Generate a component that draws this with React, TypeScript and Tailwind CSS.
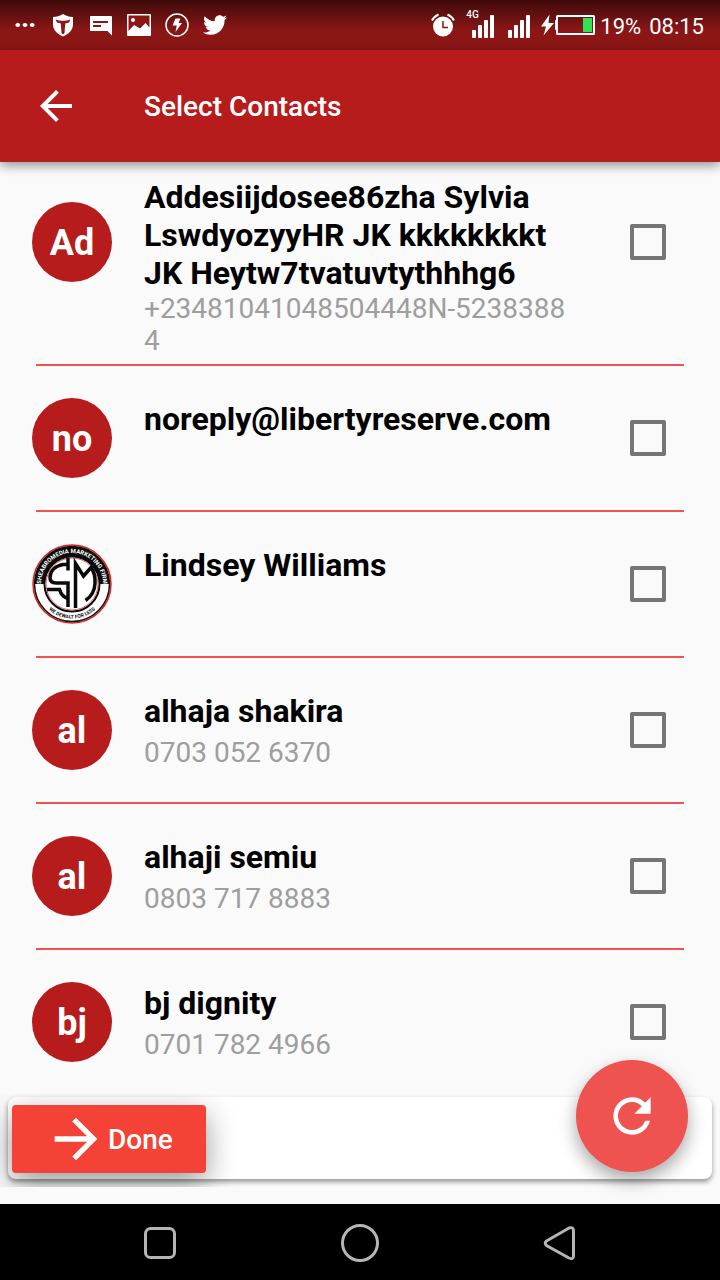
import React from 'react';
import { FaTwitter } from 'react-icons/fa';
import { MdArrowBack, MdArrowForward, MdMoreHoriz, MdRefresh } from 'react-icons/md';

const contacts = [
  {
    initials: 'Ad',
    name: 'Addesiijdosee86zha Sylvia LswdyozyyHR JK kkkkkkkkt JK Heytw7tvatuvtythhhg6',
    phone: '+23481041048504448N-52383884',
    tall: true
  },
  { initials: 'no', name: 'noreply@libertyreserve.com' },
  { name: 'Lindsey Williams' },
  { initials: 'al', name: 'alhaja shakira', phone: '0703 052 6370' },
  { initials: 'al', name: 'alhaji semiu', phone: '0803 717 8883' },
  { initials: 'bj', name: 'bj dignity', phone: '0701 782 4966' }
];

function SignalBars() {
  return (
    <svg width="22" height="24" viewBox="0 0 22 24" fill="currentColor">
      <rect x="0" y="16" width="4" height="8" rx="1" />
      <rect x="6" y="11" width="4" height="13" rx="1" />
      <rect x="12" y="6" width="4" height="18" rx="1" />
      <rect x="18" y="1" width="4" height="23" rx="1" />
    </svg>
  );
}

function StatusBar() {
  return (
    <div className="flex h-[50px] items-center justify-between bg-[#8b1616] bg-linear-to-b from-[#3f0a0a] to-[#8b1616] to-60% pl-[13px] pr-4 text-white">
      <div className="flex items-center gap-[14px]">
        <MdMoreHoriz className="size-6" viewBox="2 0 20 24" preserveAspectRatio="none" />
        <svg width="24" height="24" viewBox="0 0 24 24">
          <path d="M12 1C9 3 5.500 4 2 4v7c0 6 4 10 10 12.500C18 21 22 17 22 11V4c-3.500 0-7-1-10-3z" fill="currentColor" />
          <path d="M4.500 6.500C9 8.200 15 8.200 19.500 6.500L18 9.500l-3.800 1-.7 9.500L12 21.500 10.500 20l-.7-9.500L6 9.500z" fill="#8b1616" />
        </svg>
        <svg width="24" height="24" viewBox="0 0 24 24">
          <path d="M2 3h20a1 1 0 0 1 1 1v18.500L18.500 18H2a1 1 0 0 1-1-1V4a1 1 0 0 1 1-1z" fill="currentColor" />
          <path d="M4 9h15M4 13h8" stroke="#8b1616" strokeWidth="2" />
        </svg>
        <svg width="24" height="24" viewBox="0 0 24 24">
          <rect x="0" y="1" width="24" height="22" rx="1" fill="currentColor" />
          <path d="M1.500 2.500h21v12L18.500 10 13 15.500 7 12l-5.500 6z" fill="#8b1616" />
          <circle cx="6" cy="7" r="2" fill="currentColor" />
        </svg>
        <svg width="24" height="24" viewBox="0 0 24 24">
          <circle cx="12" cy="12" r="11" fill="none" stroke="currentColor" strokeWidth="1.500" />
          <path d="M10.500 5.500h5l-2 4.500H17l-6.500 9 1.200-6.500H7.500z" fill="currentColor" />
        </svg>
        <FaTwitter className="size-6" />
      </div>
      <div className="flex items-center">
        <svg width="24" height="24" viewBox="0 0 24 24">
          <circle cx="12" cy="13.500" r="10" fill="currentColor" />
          <path d="M12 8v6.500h5" fill="none" stroke="#8b1616" strokeWidth="1.500" />
          <path d="M1 7.500Q3 3.500 7.500 1.500M23 7.500Q21 3.500 16.500 1.500" fill="none" stroke="currentColor" strokeWidth="2" />
        </svg>
        <div className="relative ml-[17px] pt-0.5">
          <SignalBars />
          <span className="absolute -left-1.5 -top-0.5 text-[10px] leading-[10px] font-medium">4G</span>
        </div>
        <div className="ml-[14px] pt-0.5">
          <SignalBars />
        </div>
        <svg className="ml-2.5 mr-1" width="56" height="24" viewBox="0 0 56 24">
          <path d="M9.500 1.500L1 13.500h5L3.500 22.500 14 10H8.500z" fill="currentColor" />
          <rect x="17" y="3" width="37" height="18" rx="0.500" fill="none" stroke="currentColor" strokeWidth="2" />
          <rect x="15" y="7" width="3" height="10" rx="1" fill="currentColor" />
          <rect x="43" y="5" width="9" height="14" fill="#35e052" />
        </svg>
        <div className="flex gap-2 pt-1 text-[22px] leading-6">
          <span>19%</span>
          <span>08:15</span>
        </div>
      </div>
    </div>
  );
}

function LogoAvatar() {
  return (
    <svg className="mt-8 size-20 shrink-0" viewBox="0 0 80 80" role="img" aria-label="Lindsey Williams">
      <circle cx="40" cy="40" r="39" fill="#fff" stroke="#e0201f" strokeWidth="1.500" />
      <circle cx="40" cy="40" r="37.500" fill="#fff" stroke="#111" strokeWidth="1.500" />
      <path d="M2.500 40a37.500 37.500 0 0 1 75 0z" fill="#0a0a0a" />
      <circle cx="40" cy="40" r="27.500" fill="#fff" stroke="#0a0a0a" strokeWidth="2" />
      <circle cx="40" cy="40" r="26" fill="none" stroke="#d66" strokeWidth="1" />
      <path
        d="M36 14v12.500M36 20.500h-5C23 22 18 27 18 33.500q0 5.500 6 5.500h12v24M15 45.500h12.500q2 7 8.500 9"
        fill="none"
        stroke="#0a0a0a"
        strokeWidth="3.500"
      />
      <path d="M43.500 64V19.500L51.500 32l7.500-8.500q4.500 6 4 16-.5 11-9.500 17" fill="none" stroke="#0a0a0a" strokeWidth="3.500" />
      <path id="logo-top" d="M9 40a31 31 0 0 1 62 0" fill="none" />
      <path id="logo-bottom" d="M14 62.700A34.500 34.500 0 0 0 66 62.700" fill="none" />
      <text fill="#fff" className="text-[6px] font-bold">
        <textPath href="#logo-top" startOffset="50%" textAnchor="middle">SHEABROMEDIA MARKETING FIRM</textPath>
      </text>
      <text fill="#111" className="text-[5px] font-bold">
        <textPath href="#logo-bottom" startOffset="50%" textAnchor="middle">WE DEWALT FOR LESS</textPath>
      </text>
    </svg>
  );
}

export default function App() {
  return (
    <div className="flex min-h-screen flex-col bg-[#fafafa] font-[Roboto,sans-serif]">
      <StatusBar />

      <header className="relative z-10 flex h-28 items-center bg-[#b71c1c] px-8 text-white shadow-[0_4px_10px_rgba(0,0,0,0.4)]">
        <button aria-label="Back" className="mr-16">
          <MdArrowBack className="size-12" />
        </button>
        <h1 className="pt-0.5 text-[28px] leading-8 font-medium">Select Contacts</h1>
      </header>

      <main className="flex-1 pt-2">
        <ul>
          {contacts.map((contact, index) => (
            <li key={index}>
              <label
                htmlFor={`contact-${index}`}
                className={`flex items-start pl-8 pr-[54px] ${contact.tall ? 'min-h-[194px]' : 'min-h-36'}`}
              >
                {contact.initials ? (
                  <span className="mt-8 flex size-20 shrink-0 items-center justify-center rounded-full bg-[#b71c1c] pt-0.5 text-4xl font-bold text-white">
                    {contact.initials}
                  </span>
                ) : (
                  <LogoAvatar />
                )}
                <span className={`ml-8 mr-[54px] flex min-w-0 flex-1 flex-col ${contact.tall ? 'gap-px pt-2' : 'gap-[7px] pt-[34px]'}`}>
                  <span className="text-[32px] leading-[38px] font-bold text-black">{contact.name}</span>
                  {contact.phone && (
                    <span className="text-[28px] leading-8 break-all text-[#9e9e9e]">{contact.phone}</span>
                  )}
                </span>
                <input
                  id={`contact-${index}`}
                  type="checkbox"
                  className="mt-[54px] size-9 shrink-0 appearance-none rounded-[2px] border-4 border-[#757575] checked:bg-[#b71c1c]"
                />
              </label>
              {index < contacts.length - 1 && <hr className="mx-9 border-t-2 border-[#ef5350]" />}
            </li>
          ))}
        </ul>
      </main>

      <footer className="relative mb-[17px]">
        <div className="overflow-hidden px-2 pt-[3px] pb-2">
          <div className="flex h-[82px] items-center rounded-lg bg-white px-1 pt-0.5 shadow-[0_3px_5px_rgba(0,0,0,0.4)]">
            <button className="flex h-[68px] items-center rounded-sm bg-[#f44336] pl-8 pr-[33px] text-[28px] font-medium text-white shadow-[0_10px_30px_rgba(0,0,0,0.4)]">
              <MdArrowForward className="size-16" />
              <span className="pt-0.5">Done</span>
            </button>
          </div>
        </div>
        <button
          aria-label="Refresh"
          className="absolute right-8 bottom-[15px] flex size-28 items-center justify-center rounded-full bg-[#ef5350] text-white shadow-[0_8px_18px_rgba(0,0,0,0.35)]"
        >
          <MdRefresh className="size-14" />
        </button>
      </footer>

      <nav className="flex h-[76px] items-center justify-center gap-40 bg-black pt-0.5 text-[#b5b5b5]">
        <button aria-label="Recent apps">
          <svg width="40" height="40" viewBox="0 0 40 40" fill="none" stroke="currentColor" strokeWidth="3">
            <rect x="5.500" y="5.500" width="29" height="29" rx="5" />
          </svg>
        </button>
        <button aria-label="Home">
          <svg width="40" height="40" viewBox="0 0 40 40" fill="none" stroke="currentColor" strokeWidth="3">
            <circle cx="20" cy="20" r="17.500" />
          </svg>
        </button>
        <button aria-label="Back to previous app">
          <svg width="40" height="40" viewBox="0 0 40 40" fill="none" stroke="currentColor" strokeWidth="3">
            <path d="M6.500 18L29 5Q33.500 3.500 33.500 8v25Q33.500 37 29 35L6.500 22.500Q4 20 6.500 18z" />
          </svg>
        </button>
      </nav>
    </div>
  );
}
